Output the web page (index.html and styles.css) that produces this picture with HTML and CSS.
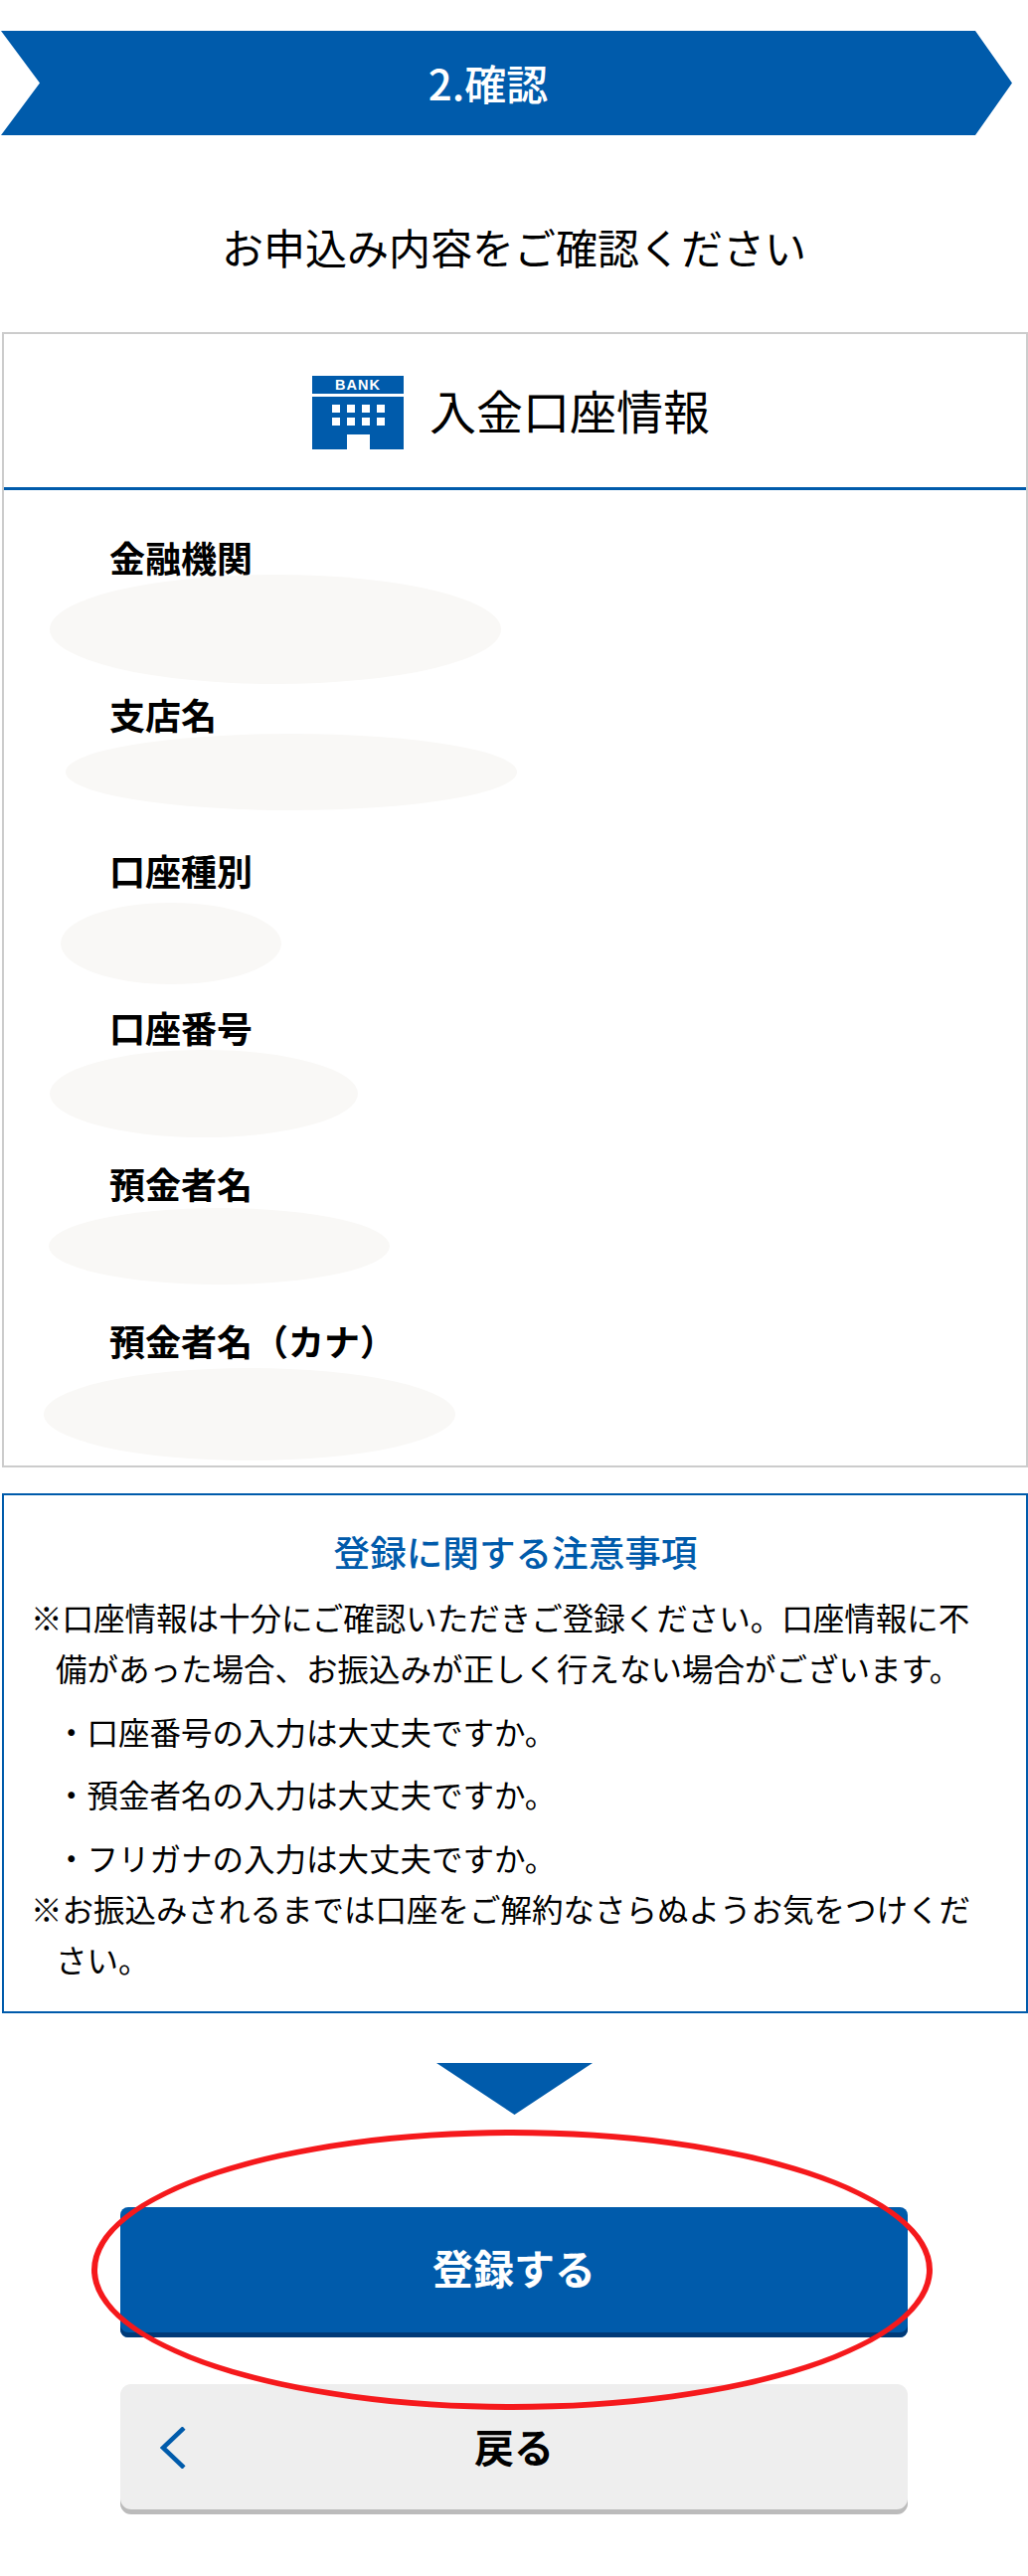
FILE: index.html
```html
<!DOCTYPE html>
<html lang="ja">
<head>
<meta charset="utf-8">
<title>確認</title>
<link rel="stylesheet" href="styles.css">
</head>
<body>
<main class="page">
  <div class="step">2.確認</div>
  <h1 class="lead">お申込み内容をご確認ください</h1>

  <section class="card">
    <header class="card-head">
      <svg class="bank" viewBox="0 0 92 74" aria-hidden="true">
        <rect class="bank-fill" x="0" y="0" width="92" height="18"/>
        <text class="bank-text" x="46" y="14.2" text-anchor="middle">BANK</text>
        <path class="bank-fill" d="M0 21H92V74H58V59H35V74H0Z"/>
        <g class="bank-win">
          <rect x="20" y="29" width="8" height="8"/><rect x="35" y="29" width="8" height="8"/><rect x="50" y="29" width="8" height="8"/><rect x="65" y="29" width="8" height="8"/>
          <rect x="20" y="42" width="8" height="8"/><rect x="35" y="42" width="8" height="8"/><rect x="50" y="42" width="8" height="8"/><rect x="65" y="42" width="8" height="8"/>
        </g>
      </svg>
      <h2 class="card-title">入金口座情報</h2>
    </header>
    <div class="card-body">
      <div class="row"><div class="label">金融機関</div><span class="blob blob-1"></span></div>
      <div class="row"><div class="label">支店名</div><span class="blob blob-2"></span></div>
      <div class="row"><div class="label">口座種別</div><span class="blob blob-3"></span></div>
      <div class="row"><div class="label">口座番号</div><span class="blob blob-4"></span></div>
      <div class="row"><div class="label">預金者名</div><span class="blob blob-5"></span></div>
      <div class="row"><div class="label">預金者名（カナ）</div><span class="blob blob-6"></span></div>
    </div>
  </section>

  <section class="note">
    <h3 class="note-title">登録に関する注意事項</h3>
    <p class="mark">※口座情報は十分にご確認いただきご登録ください。口座情報に不備があった場合、お振込みが正しく行えない場合がございます。</p>
    <ul class="checks">
      <li>・口座番号の入力は大丈夫ですか。</li>
      <li>・預金者名の入力は大丈夫ですか。</li>
      <li>・フリガナの入力は大丈夫ですか。</li>
    </ul>
    <p class="mark">※お振込みされるまでは口座をご解約なさらぬようお気をつけください。</p>
  </section>

  <div class="arrow"></div>

  <div class="actions">
    <button class="btn btn-primary" type="button">登録する</button>
    <button class="btn btn-back" type="button">
      <svg class="chev" viewBox="0 0 26 42" aria-hidden="true"><path d="M24 1L3 21L24 41"/></svg>
      戻る
    </button>
    <span class="ring"></span>
  </div>
</main>
</body>
</html>
```

FILE: styles.css
```css
* { box-sizing: border-box; }
html, body { margin: 0; padding: 0; background: #fff; }
body {
  font-family: "Noto Sans CJK JP", "Noto Sans", sans-serif;
  color: #000;
}
.page {
  width: 1034px;
  height: 2591px;
  overflow: hidden;
  padding-top: 31px;
}
.step {
  width: 1017px;
  height: 105px;
  margin-left: 1px;
  padding-right: 37px;
  background: #005bab;
  color: #fff;
  font-size: 42px;
  font-weight: 500;
  line-height: 103px;
  text-align: center;
  clip-path: polygon(0 0, 980px 0, 100% 50%, 980px 100%, 0 100%, 39px 50%);
}
.lead {
  margin: 0;
  height: 198px;
  font-size: 42px;
  font-weight: 400;
  line-height: 223px;
  text-align: center;
}
.card {
  margin-left: 2px;
  width: 1032px;
  height: 1142px;
  border: 2px solid #ccc;
}
.card-head {
  height: 157px;
  border-bottom: 3px solid #005bab;
  display: flex;
  align-items: center;
  justify-content: center;
  gap: 26px;
  padding: 3px 8px 0 0;
}
.bank { width: 92px; height: 74px; display: block; }
.bank-fill { fill: #005bab; }
.bank-win rect { fill: #fff; }
.bank-text {
  fill: #fff;
  font-family: "Liberation Sans", sans-serif;
  font-size: 14.5px;
  font-weight: 700;
  letter-spacing: 1px;
}
.card-title {
  margin: 0 0 4px;
  font-size: 47px;
  font-weight: 400;
  line-height: 1.2;
}
.card-body { padding-top: 32px; }
.row {
  position: relative;
  height: 157.6px;
  padding-left: 106px;
}
.label {
  font-size: 36px;
  font-weight: 700;
  line-height: 70px;
}
.blob {
  position: absolute;
  display: block;
  background: #f9f8f6;
  border-radius: 50%;
}
.blob-1 { left: 46px; top: 53px; width: 454px; height: 110px; }
.blob-2 { left: 62px; top: 55.4px; width: 454px; height: 77px; }
.blob-3 { left: 57px; top: 67.8px; width: 222px; height: 82px; }
.blob-4 { left: 46px; top: 58.2px; width: 310px; height: 88px; }
.blob-5 { left: 45px; top: 59.6px; width: 343px; height: 77px; }
.blob-6 { left: 40px; top: 63px; width: 414px; height: 93px; }
.note {
  margin: 26px 0 0 2px;
  width: 1032px;
  height: 523px;
  border: 2px solid #005bab;
  padding: 34px 26px 0 27px;
  font-size: 31.5px;
  line-height: 51px;
}
.note-title {
  margin: 0 0 17px;
  color: #005bab;
  font-size: 36.6px;
  font-weight: 500;
  line-height: 46px;
  text-align: center;
}
.mark {
  margin: 0;
  padding-left: 25px;
  text-indent: -25px;
}
.checks {
  list-style: none;
  margin: 0;
  padding: 0 0 0 25px;
}
.checks li { margin-top: 12.5px; }
.arrow {
  width: 157px;
  height: 52px;
  margin: 50px 0 0 439px;
  background: #005bab;
  clip-path: polygon(0 0, 100% 0, 50% 100%);
}
.actions {
  position: relative;
  margin: 93px 0 0 121px;
  width: 792px;
}
.btn {
  display: block;
  position: relative;
  width: 792px;
  height: 131px;
  border: 0;
  padding: 0 0 11px;
  border-radius: 8px;
  font-family: inherit;
  font-size: 41px;
  font-weight: 700;
  text-align: center;
}
.btn-primary {
  background: #005bab;
  color: #fff;
  box-shadow: inset 0 -5px 0 #003a78;
}
.btn-back {
  margin-top: 47px;
  padding-bottom: 7px;
  background: #eee;
  color: #000;
  font-size: 40px;
  box-shadow: inset 0 -5px 0 #bbb;
  border-radius: 11px;
}
.chev {
  position: absolute;
  left: 40px;
  top: 43px;
  width: 26px;
  height: 42px;
  fill: none;
  stroke: #005bab;
  stroke-width: 4.5px;
}
.ring {
  position: absolute;
  left: -29px;
  top: -78px;
  width: 846px;
  height: 282px;
  border: 6.5px solid #f5191c;
  border-radius: 50%;
  pointer-events: none;
}
```
